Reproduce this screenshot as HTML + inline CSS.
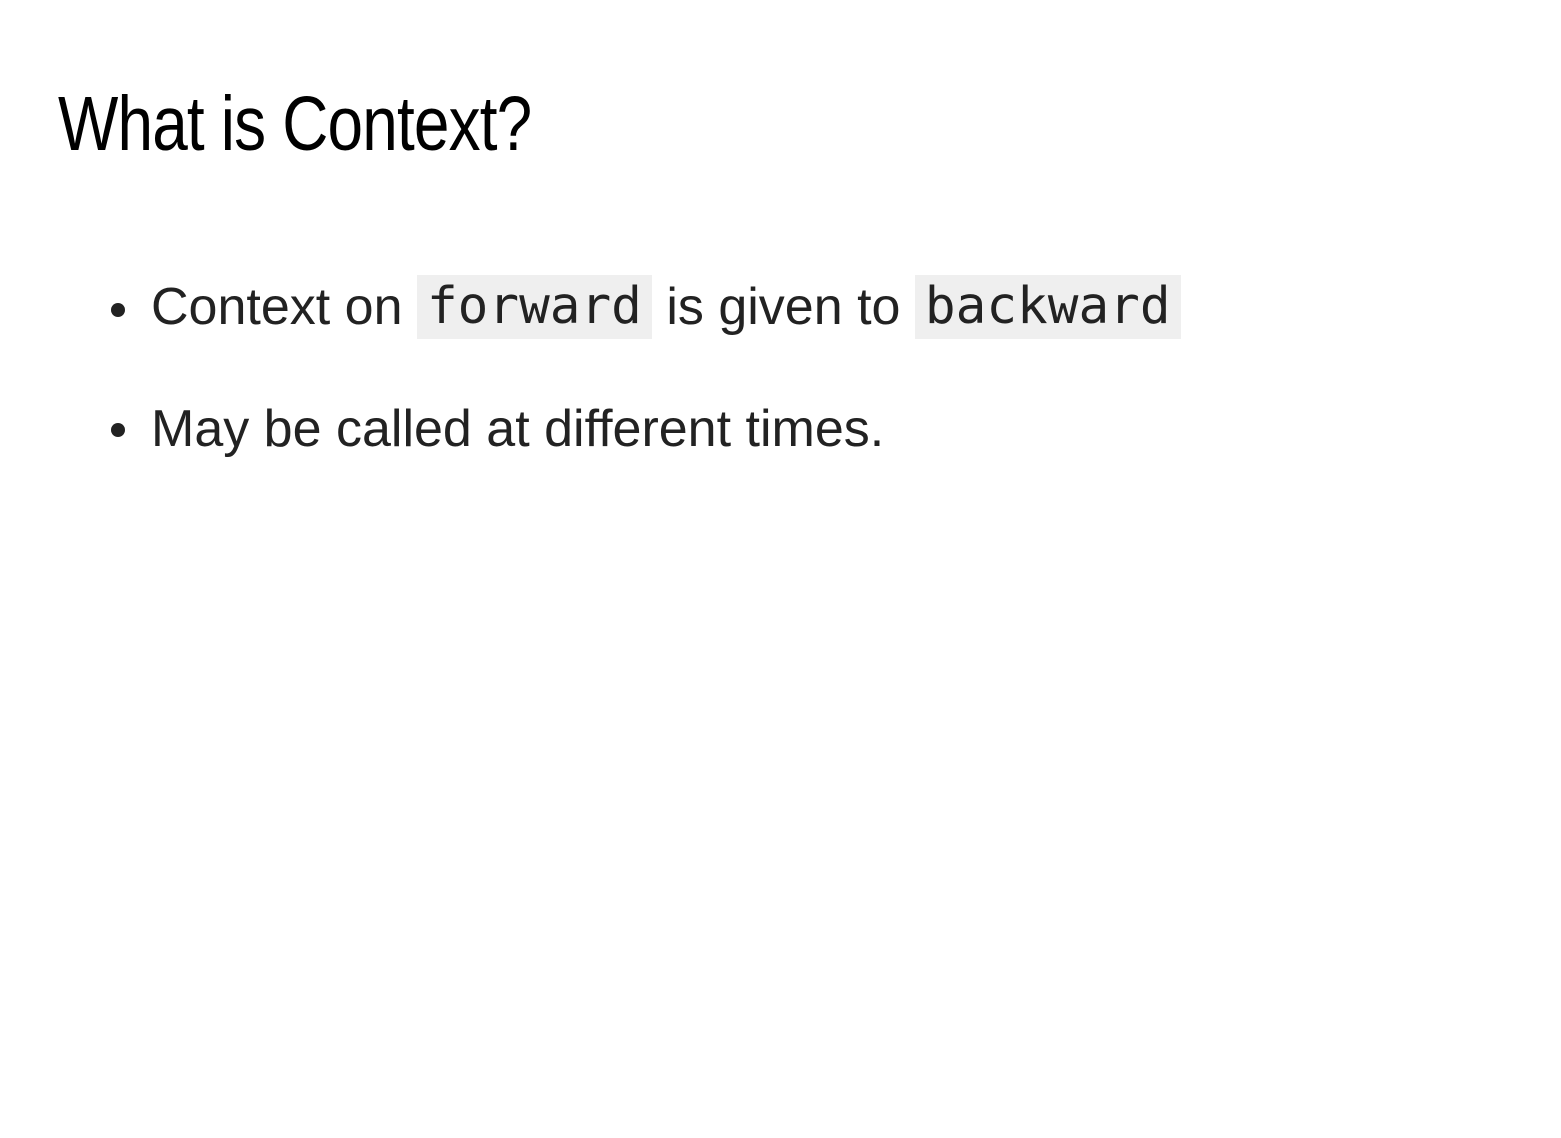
<!DOCTYPE html>
<html><head><meta charset="utf-8"><style>
html,body{margin:0;padding:0;background:#fff;width:1561px;height:1138px;overflow:hidden}
h1{position:absolute;left:58px;top:79px;margin:0;font-family:"Liberation Sans Narrow","Liberation Sans",sans-serif;font-weight:normal;font-size:77px;line-height:90px;color:#000;transform-origin:0 0;transform:scaleX(0.83);white-space:nowrap;letter-spacing:-1px}
.li{position:absolute;left:151px;font-family:"Liberation Sans",sans-serif;font-size:52px;color:#222;white-space:nowrap;line-height:64px}
.dot{position:absolute;left:111px;width:14px;height:14px;border-radius:50%;background:#222}
code{font-family:"DejaVu Sans Mono","Liberation Mono",monospace;font-size:51px;background:#efefef;padding:0 10px;display:inline-block;line-height:64px;vertical-align:top}
</style></head><body>
<h1>What is Context?</h1>
<div class="dot" style="top:303px"></div>
<div class="li" style="top:275px">Context on <code>forward</code> is given to <code>backward</code></div>
<div class="dot" style="top:423px"></div>
<div class="li" style="top:397px">May be called at different times.</div>
</body></html>
